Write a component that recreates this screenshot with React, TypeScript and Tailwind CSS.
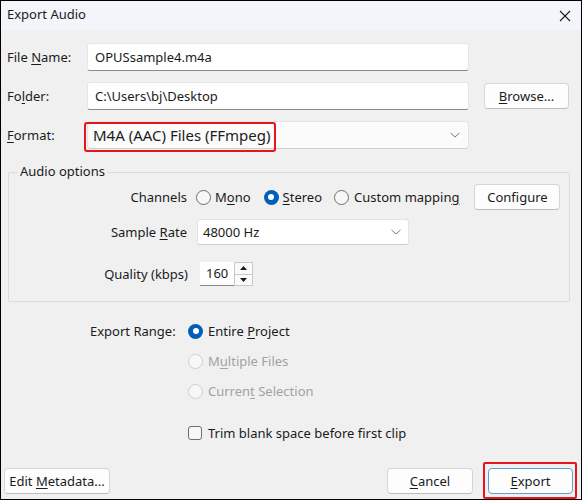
import React from "react";

function Ul({ children }: { children: React.ReactNode }) {
  return <span className="underline underline-offset-2 decoration-1">{children}</span>;
}

function Chevron() {
  return (
    <svg width="12" height="8" viewBox="0 0 12 8" fill="none" className="text-[#7a7a7a]">
      <path d="M1.5 2 L6 6 L10.5 2" stroke="currentColor" strokeWidth="1" />
    </svg>
  );
}

function Radio({ checked, disabled }: { checked?: boolean; disabled?: boolean }) {
  if (checked) {
    return (
      <span className="w-[15px] h-[15px] rounded-full bg-[#005fb8] flex items-center justify-center shrink-0">
        <span className="w-[6px] h-[6px] rounded-full bg-white" />
      </span>
    );
  }
  return (
    <span
      className={
        "w-[15px] h-[15px] rounded-full border bg-[#f7f7f7] shrink-0 " +
        (disabled ? "border-[#cfcfcf]" : "border-[#6e6e6e]")
      }
    />
  );
}

function Button({ children, className }: { children: React.ReactNode; className?: string }) {
  return (
    <div
      className={
        "h-[26px] flex items-center justify-center rounded-[4px] bg-[#fdfdfd] border border-[#d6d6d6] border-b-[#bdbdbd] text-[13px] " +
        (className ?? "")
      }
    >
      <span>{children}</span>
    </div>
  );
}

export default function App() {
  return (
    <div className="w-[582px] h-[500px] border border-black bg-[#f0f0f0] flex flex-col text-[#1b1b1b] font-['Noto_Sans',sans-serif] text-[13px] leading-none overflow-hidden">
      {/* title bar */}
      <div className="h-[29px] bg-[#f2f5f9] flex items-center justify-between pl-[6px] pr-[9px] shrink-0">
        <span className="text-[13px] -mt-[2px]">Export Audio</span>
        <svg width="14" height="14" viewBox="0 0 14 14">
          <path d="M2 2 L12 12 M12 2 L2 12" stroke="#1b1b1b" strokeWidth="1.1" />
        </svg>
      </div>

      {/* top fields */}
      <div className="flex flex-col gap-[11px] pt-[13px] pl-[6px] pr-[12px]">
        <div className="flex items-center">
          <span className="w-[80px]">
            File <Ul>N</Ul>ame:
          </span>
          <div className="w-[382px] h-[28px] bg-white rounded-[3px] border border-[#e6e6e6] border-b-[#8a8a8a] flex items-center px-[7px]">
            OPUSsample4.m4a
          </div>
        </div>
        <div className="flex items-center">
          <span className="w-[80px]">
            Fo<Ul>l</Ul>der:
          </span>
          <div className="w-[382px] h-[28px] bg-white rounded-[3px] border border-[#e6e6e6] border-b-[#8a8a8a] flex items-center px-[7px]">
            C:\Users\bj\Desktop
          </div>
          <Button className="w-[85px] ml-[15px]">
            <Ul>B</Ul>rowse...
          </Button>
        </div>
        <div className="flex items-center">
          <span className="w-[80px]">
            <Ul>F</Ul>ormat:
          </span>
          <div className="relative w-[382px] h-[28px] bg-[#fbfbfb] rounded-[4px] border border-[#e3e3e3] border-b-[#cfcfcf] flex items-center justify-between pl-[5px] pr-[7px]">
            <span className="text-[15px]">M4A (AAC) Files (FFmpeg)</span>
            <Chevron />
            <div className="absolute left-[-4px] top-[0px] w-[192px] h-[30px] border-2 border-[#e8141b] rounded-[3px]" />
          </div>
        </div>
      </div>

      {/* audio options group */}
      <div className="relative mt-[23px] ml-[7px] w-[562px] h-[130px] border border-[#dcdcdc] rounded-[2px]">
        <span className="absolute left-[9px] top-[-8px] bg-[#f0f0f0] px-[2px]">Audio options</span>
        <div className="flex flex-col pt-[12px]">
          <div className="flex items-center h-[24px]">
            <span className="w-[178px] text-right">Channels</span>
            <div className="flex items-center gap-[4px] ml-[9px]">
              <Radio />
              <span>
                M<Ul>o</Ul>no
              </span>
            </div>
            <div className="flex items-center gap-[4px] ml-[13px]">
              <Radio checked />
              <span>
                <Ul>S</Ul>tereo
              </span>
            </div>
            <div className="flex items-center gap-[5px] ml-[12px]">
              <Radio />
              <span>
                Custom mappin<Ul>g</Ul>
              </span>
            </div>
            <Button className="w-[86px] ml-[15px]">Configure</Button>
          </div>
          <div className="flex items-center h-[26px] mt-[10px]">
            <span className="w-[178px] text-right">
              Sample <Ul>R</Ul>ate
            </span>
            <div className="w-[212px] h-[26px] ml-[10px] bg-white rounded-[3px] border border-[#e3e3e3] border-b-[#cfcfcf] flex items-center justify-between pl-[5px] pr-[6px]">
              <span>48000 Hz</span>
              <Chevron />
            </div>
          </div>
          <div className="flex items-center h-[24px] mt-[17px]">
            <span className="w-[179px] text-right">Quality (kbps)</span>
            <div className="ml-[12px] w-[34px] h-[24px] flex items-center pl-[6px] border-b border-[#8a8a8a] bg-white">
              160
            </div>
            <div className="w-[19px] h-[24px] flex flex-col border border-[#c8c8c8] bg-[#f0f0f0]">
              <div className="flex-1 flex items-center justify-center border-b border-[#c8c8c8] bg-[#fafafa]">
                <svg width="7" height="4" viewBox="0 0 7 4">
                  <path d="M0 4 L3.5 0 L7 4 Z" fill="#1b1b1b" />
                </svg>
              </div>
              <div className="flex-1 flex items-center justify-center bg-[#fafafa]">
                <svg width="7" height="4" viewBox="0 0 7 4">
                  <path d="M0 0 L3.5 4 L7 0 Z" fill="#1b1b1b" />
                </svg>
              </div>
            </div>
          </div>
        </div>
      </div>

      {/* export range */}
      <div className="flex flex-col pl-[89px] mt-[20px]">
        <div className="flex items-center h-[18px]">
          <span className="w-[98px]">Export Range:</span>
          <div className="flex items-center gap-[5px]">
            <Radio checked />
            <span>
              Entire <Ul>P</Ul>roject
            </span>
          </div>
        </div>
        <div className="flex items-center h-[18px] mt-[12px] ml-[98px] gap-[5px] text-[#a2a2a2]">
          <Radio disabled />
          <span>
            M<Ul>u</Ul>ltiple Files
          </span>
        </div>
        <div className="flex items-center h-[18px] mt-[12px] ml-[98px] gap-[5px] text-[#a2a2a2]">
          <Radio disabled />
          <span>
            Curren<Ul>t</Ul> Selection
          </span>
        </div>
        <div className="flex items-center h-[18px] mt-[24px] ml-[98px] gap-[6px]">
          <span className="w-[14px] h-[14px] rounded-[3px] border border-[#6e6e6e] bg-[#f7f7f7] shrink-0" />
          <span>Trim blank space before first clip</span>
        </div>
      </div>

      {/* bottom buttons */}
      <div className="flex items-center mt-auto mb-[5px] pl-[3px] pr-[8px]">
        <Button className="w-[106px]">
          Edit <Ul>M</Ul>etadata...
        </Button>
        <div className="flex-1" />
        <Button className="w-[86px]">
          <Ul>C</Ul>ancel
        </Button>
        <div className="relative ml-[15px]">
          <div className="w-[85px] h-[26px] flex items-center justify-center rounded-[4px] bg-[#fdfdfd] border border-[#5a9fd6]">
            <span>
              <Ul>E</Ul>xport
            </span>
          </div>
          <div className="absolute left-[-5px] top-[-6px] w-[94px] h-[37px] border-2 border-[#e8141b] rounded-[2px]" />
        </div>
      </div>
    </div>
  );
}
